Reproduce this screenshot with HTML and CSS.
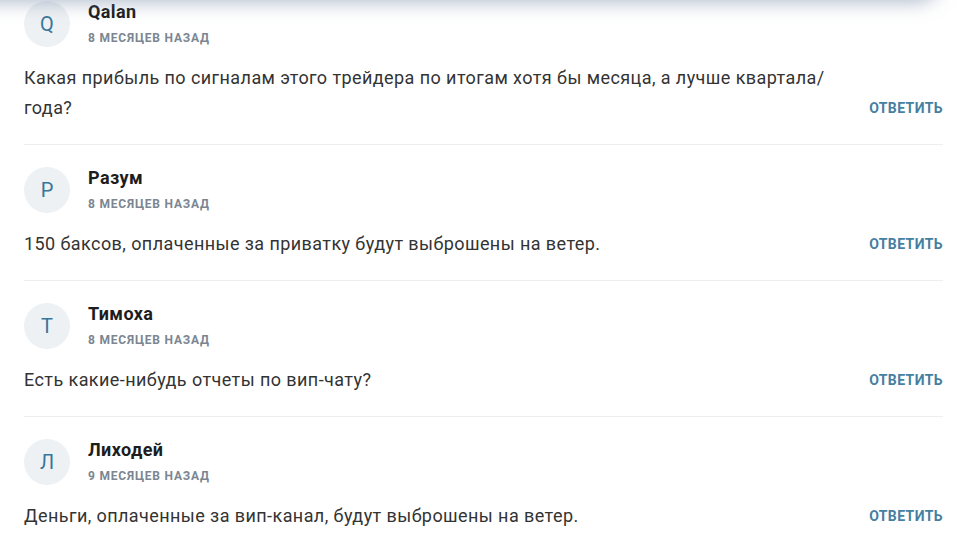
FILE: index.html
```html
<!DOCTYPE html>
<html lang="ru">

<head>
    <meta charset="UTF-8">
    <meta name="viewport" content="width=device-width, initial-scale=1.0">
    <title>Комментарии</title>
    <link rel="stylesheet" href="styles.css">
</head>

<body>
    <div class="header-shadow"></div>

    <div class="comments">
        <div class="comment">
            <div class="comment-head">
                <div class="avatar">Q</div>
                <div class="author">
                    <div class="name">Qalan</div>
                    <div class="date">8 месяцев назад</div>
                </div>
            </div>
            <div class="comment-body">
                <p class="text">Какая прибыль по сигналам этого трейдера по итогам хотя бы месяца, а лучше квартала/ года?</p>
                <a class="reply" href="#">Ответить</a>
            </div>
        </div>

        <div class="comment">
            <div class="comment-head">
                <div class="avatar">Р</div>
                <div class="author">
                    <div class="name">Разум</div>
                    <div class="date">8 месяцев назад</div>
                </div>
            </div>
            <div class="comment-body">
                <p class="text">150 баксов, оплаченные за приватку будут выброшены на ветер.</p>
                <a class="reply" href="#">Ответить</a>
            </div>
        </div>

        <div class="comment">
            <div class="comment-head">
                <div class="avatar">Т</div>
                <div class="author">
                    <div class="name">Тимоха</div>
                    <div class="date">8 месяцев назад</div>
                </div>
            </div>
            <div class="comment-body">
                <p class="text">Есть какие-нибудь отчеты по вип-чату?</p>
                <a class="reply" href="#">Ответить</a>
            </div>
        </div>

        <div class="comment">
            <div class="comment-head">
                <div class="avatar">Л</div>
                <div class="author">
                    <div class="name">Лиходей</div>
                    <div class="date">9 месяцев назад</div>
                </div>
            </div>
            <div class="comment-body">
                <p class="text">Деньги, оплаченные за вип-канал, будут выброшены на ветер.</p>
                <a class="reply" href="#">Ответить</a>
            </div>
        </div>
    </div>
</body>

</html>
```

FILE: styles.css
```css
body {
    margin: 0;
    font-family: Roboto, "Liberation Sans", Arial, sans-serif;
    background: #fff;
    color: #333;
    overflow: hidden;
}

.header-shadow {
    position: absolute;
    top: -40px;
    left: -40px;
    right: 30px;
    height: 40px;
    background: #fff;
    border-radius: 0 0 30px 0;
    box-shadow: 0 3px 18px rgba(110, 130, 160, 0.5);
    z-index: 2;
}

.comments {
    margin: -21px 31px 0 24px;
}

.comment {
    padding: 22px 0 21px;
    border-bottom: 1px solid #eceef0;
}

.comment-head {
    display: flex;
    align-items: flex-start;
}

.avatar {
    width: 46px;
    height: 46px;
    border-radius: 50%;
    background: #eef1f4;
    color: #37769a;
    font-size: 20px;
    display: flex;
    align-items: center;
    justify-content: center;
    flex-shrink: 0;
}

.author {
    margin-left: 18px;
    display: flex;
    flex-direction: column;
    gap: 7px;
}

.name {
    font-size: 18px;
    line-height: 22px;
    font-weight: 700;
    letter-spacing: 0.4px;
    color: #1d1d1d;
}

.date {
    font-size: 12px;
    line-height: 16px;
    font-weight: 700;
    text-transform: uppercase;
    letter-spacing: 0.8px;
    color: #7b8691;
}

.comment-body {
    display: flex;
    align-items: flex-end;
    gap: 24px;
    margin-top: 16px;
}

.text {
    flex: 1;
    margin: 0;
    font-size: 18px;
    line-height: 30px;
    letter-spacing: 0.42px;
    color: #333;
}

.reply {
    font-size: 14px;
    line-height: 30px;
    font-weight: 700;
    text-transform: uppercase;
    letter-spacing: 0.4px;
    color: #467f9f;
    text-decoration: none;
    white-space: nowrap;
}
```
